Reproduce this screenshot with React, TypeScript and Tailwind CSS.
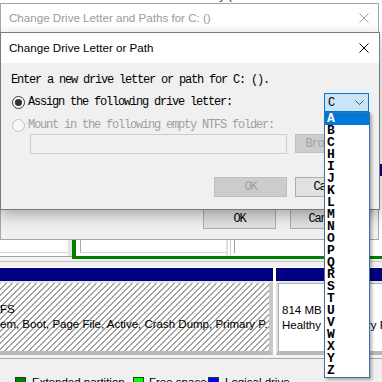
import React from "react";

function CloseX({ color }: { color: string }) {
  return (
    <svg width="10" height="10" viewBox="0 0 10 10" className="shrink-0">
      <path d="M0.5 0.5L9.5 9.5M9.5 0.5L0.5 9.5" stroke={color} strokeWidth="1" fill="none" />
    </svg>
  );
}

function Radio({ checked, disabled }: { checked?: boolean; disabled?: boolean }) {
  return (
    <svg width="13" height="13" viewBox="0 0 13 13" className="shrink-0">
      <circle
        cx="6.5"
        cy="6.5"
        r="6"
        fill={disabled ? "#f7f7f7" : "#ffffff"}
        stroke={disabled ? "#c2c2c2" : "#333333"}
        strokeWidth="1"
      />
      {checked && <circle cx="6.5" cy="6.5" r="3.6" fill="#333333" />}
    </svg>
  );
}

const letters = ["A", "B", "C", "H", "I", "J", "K", "L", "M", "N", "O", "P", "Q", "R", "S", "T", "U", "V", "W", "X", "Y", "Z"];

export default function App() {
  return (
    <div className="relative w-[382px] h-[382px] overflow-hidden bg-white font-['Liberation_Sans',Arial,sans-serif] text-[11.5px] text-black">
      {/* Background: Disk Management */}
      <div className="flex flex-col w-full h-full">
        <div className="h-[3px] shrink-0 overflow-hidden">
          <div className="flex -mt-[11px] h-[14px] leading-[14px] whitespace-nowrap text-[#1a1a1a]">
            <span className="ml-[27px] w-[67px]">Basic</span>
            <span className="w-[92px]">NTFS</span>
            <span className="w-[70px]">Healthy (S</span>
            <span className="w-[96px]">59.19 GB</span>
            <span>2 %</span>
          </div>
        </div>
        <div className="h-[236px] shrink-0 flex justify-end">
          <div className="w-[3px] flex flex-col">
            <div className="h-[161px] shrink-0 bg-white" />
            <div className="h-[12px] shrink-0 bg-[#000080]" />
            <div className="flex-1 bg-white" />
          </div>
        </div>
        {/* row A y239-256 */}
        <div className="h-[17px] shrink-0 flex bg-white">
          <div className="w-[68px] h-[14px] border-b border-[#d4d4d4] bg-white" />
          <div className="w-[4px] bg-[#e4e4e4]" />
          <div className="w-[4px] bg-[#008000]" />
          <div className="w-[4px] bg-white" />
          <div className="w-[146px] h-[14px] border-l border-[#a8a8a8] border-b border-b-[#d4d4d4]" />
          <div className="w-[2px] bg-[#e0e0e0]" />
          <div className="w-[2px] bg-white" />
          <div className="w-[1px] bg-[#d0d0d0]" />
          <div className="w-[3px] bg-white" />
          <div className="w-[1px] h-[14px] bg-[#a0a0a0]" />
          <div className="flex-1 bg-white" />
        </div>
        {/* row B y256-259 */}
        <div className="h-[3px] shrink-0 flex">
          <div className="w-[72px] border-t border-[#a0a0a0] bg-[#f4f4f4]" />
          <div className="flex-1 bg-[#008000]" />
        </div>
        {/* row C y259-268 */}
        <div className="h-[9px] shrink-0 bg-[#f0f0f0] flex flex-col">
          <div className="mt-[2px] border-t border-[#c4c4c4]" />
          <div className="mt-auto h-[1px] bg-white" />
        </div>
        {/* partitions y268-355 */}
        <div className="h-[87px] shrink-0 flex bg-white">
          <div className="w-[273px] flex flex-col">
            <div className="h-[13px] shrink-0 bg-[#000080]" />
            <div className="flex-1 border-t-2 border-t-[#e6e6e6] border-r-4 border-r-[#c8c8c8] border-b-4 border-b-[#b8b8b8] bg-[image:repeating-linear-gradient(135deg,#a4a4a4_0px,#a4a4a4_1px,#ffffff_1px,#ffffff_4.24px)] flex flex-col justify-center leading-[15px] overflow-hidden">
              <div className="whitespace-nowrap">FS</div>
              <div className="whitespace-nowrap">em, Boot, Page File, Active, Crash Dump, Primary P.</div>
            </div>
          </div>
          <div className="w-[3px] bg-white" />
          <div className="flex-1 flex flex-col min-w-0">
            <div className="h-[13px] shrink-0 bg-[#000080]" />
            <div className="flex-1 border-t-2 border-t-[#e6e6e6] border-l-2 border-l-[#e0e0e0] border-b-4 border-b-[#b8b8b8] flex">
              <div className="flex-1 border-l border-t border-[#b0b0b0] bg-white flex flex-col justify-center pl-[3px] leading-[15px] overflow-hidden">
                <div className="whitespace-nowrap">814 MB</div>
                <div className="whitespace-nowrap">Healthy (Recovery Partition)</div>
              </div>
            </div>
          </div>
        </div>
        {/* legend area y355-382 */}
        <div className="flex-1 min-h-0 overflow-hidden bg-[#f0f0f0] flex flex-col">
          <div className="h-[3px] shrink-0 bg-[#f4f4f4]" />
          <div className="h-[1px] shrink-0 bg-[#a8a8a8]" />
          <div className="flex shrink-0 pl-[15px] pt-[18px] leading-[13px]">
            <div className="w-[118px] flex items-start">
              <div className="w-[11px] h-[11px] border border-[#333] bg-[#008000] shrink-0" />
              <span className="ml-[6px] -mt-[1px] whitespace-nowrap">Extended partition</span>
            </div>
            <div className="w-[75px] flex items-start">
              <div className="w-[11px] h-[11px] border border-[#333] bg-[#00ff00] shrink-0" />
              <span className="ml-[5px] -mt-[1px] whitespace-nowrap">Free space</span>
            </div>
            <div className="flex items-start">
              <div className="w-[11px] h-[11px] border border-[#333] bg-[#0000ff] shrink-0" />
              <span className="ml-[6px] -mt-[1px] whitespace-nowrap">Logical drive</span>
            </div>
          </div>
        </div>
      </div>

      {/* Outer dialog (inactive) */}
      <div className="absolute left-0 top-[3px] w-[379px] h-[237px] flex flex-col border border-[#a6a6a6] bg-[#f0f0f0]">
        <div className="h-[28px] shrink-0 bg-white flex items-center pl-[8px] pr-[9px] text-[11.6px] text-[#9a9a9a]">
          <span className="flex-1 whitespace-nowrap">Change Drive Letter and Paths for C: ()</span>
          <CloseX color="#9a9a9a" />
        </div>
        <div className="flex-1 flex items-end pb-[10px] font-['Liberation_Mono',monospace] text-[12px] tracking-[-1.2px]">
          <div className="ml-[202px] w-[73px] h-[20px] border border-[#adadad] bg-[#e1e1e1] flex items-center justify-center">OK</div>
          <div className="ml-[14px] w-[73px] h-[20px] border border-[#adadad] bg-[#e1e1e1] flex items-center justify-center">Cancel</div>
        </div>
      </div>

      {/* Inner dialog (active) */}
      <div className="absolute left-0 top-[32px] w-[380px] h-[178px] flex flex-col border border-[#7a7a7a] bg-[#f0f0f0] shadow-[0_5px_14px_rgba(0,0,0,0.3)]">
        <div className="h-[30px] shrink-0 bg-white flex items-center pl-[8px] pr-[10px] text-[11.6px] text-black">
          <span className="flex-1 whitespace-nowrap">Change Drive Letter or Path</span>
          <CloseX color="#000000" />
        </div>
        <div className="flex-1 flex flex-col pl-[10px] font-['Liberation_Mono',monospace] text-[12px] tracking-[-1.2px] text-black">
          <div className="mt-[11px] h-[13px] shrink-0 leading-[13px] whitespace-nowrap">Enter a new drive letter or path for C: ().</div>
          <div className="mt-[5px] h-[20px] shrink-0 flex items-center">
            <div className="ml-[1px] flex items-center">
              <Radio checked />
            </div>
            <span className="ml-[3px] whitespace-nowrap">Assign the following drive letter:</span>
            <div className="ml-auto mr-[10px] self-start mt-[1px] w-[45px] h-[19px] border border-[#0078d7] bg-[#cce4f7] flex items-center pl-[3px] pr-[4px]">
              <span>C</span>
              <svg className="ml-auto" width="9" height="5" viewBox="0 0 9 5">
                <path d="M0.5 0.5L4.5 4.5L8.5 0.5" stroke="#505050" strokeWidth="1" fill="none" />
              </svg>
            </div>
          </div>
          <div className="mt-[6px] h-[14px] shrink-0 flex items-center text-[#a0a0a0]">
            <div className="ml-[1px] flex items-center">
              <Radio disabled />
            </div>
            <span className="ml-[3px] whitespace-nowrap">Mount in the following empty NTFS folder:</span>
          </div>
          <div className="mt-[2px] h-[20px] shrink-0 flex items-start">
            <div className="ml-[19px] w-[257px] h-[20px] border border-[#cccccc] bg-[#f0f0f0]" />
            <div className="ml-[8px] w-[75px] h-[19px] border border-[#bfbfbf] bg-[#cccccc] text-[#a0a0a0] flex items-center justify-center whitespace-nowrap">Browse...</div>
          </div>
          <div className="mt-[23px] h-[20px] shrink-0 flex">
            <div className="ml-[203px] w-[73px] h-[20px] border border-[#bfbfbf] bg-[#cccccc] text-[#a0a0a0] flex items-center justify-center">OK</div>
            <div className="ml-[8px] w-[73px] h-[20px] border border-[#adadad] bg-[#e1e1e1] flex items-center justify-center">Cancel</div>
          </div>
        </div>
      </div>

      {/* Dropdown list */}
      <div className="absolute left-[324px] top-[112px] w-[46px] border border-[#3d6fa4] bg-white shadow-[2px_2px_3px_rgba(0,0,0,0.3)] flex flex-col font-['Liberation_Mono',monospace] text-[13px] font-bold">
        {letters.map((l, i) => (
          <div
            key={l}
            className={i === 0 ? "h-[12px] shrink-0 leading-[12px] pl-[2px] bg-[#0078d7] text-white" : "h-[12px] shrink-0 leading-[12px] pl-[2px] text-black"}
          >
            {l}
          </div>
        ))}
      </div>
    </div>
  );
}
